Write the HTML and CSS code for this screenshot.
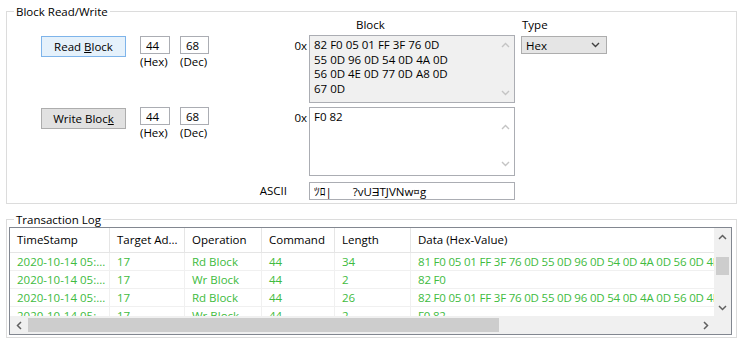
FILE: index.html
```html
<!DOCTYPE html>
<html lang="en">
<head>
    <meta charset="UTF-8">
    <title>Block Read/Write</title>
    <link rel="stylesheet" href="styles.css">
</head>
<body>
    <fieldset class="group block-group">
        <legend>Block Read/Write</legend>
        <div class="block-grid">
            <span class="col-title block-title">Block</span>
            <span class="col-title type-title">Type</span>

            <button class="btn btn-default read-btn">Read <u>B</u>lock</button>
            <div class="addr read-addr">
                <label class="addr-field"><input class="addr-hex" value="44"><span>(Hex)</span></label>
                <label class="addr-field"><input class="addr-dec" value="68"><span>(Dec)</span></label>
            </div>
            <span class="prefix read-prefix">0x</span>
            <div class="memo memo-readonly read-memo">
                <textarea readonly>82 F0 05 01 FF 3F 76 0D
55 0D 96 0D 54 0D 4A 0D
56 0D 4E 0D 77 0D A8 0D
67 0D</textarea>
                <div class="memo-scroll">
                    <svg width="9" height="6" viewBox="0 0 9 6"><path d="M1 5 L4.5 1.5 L8 5" /></svg>
                    <svg width="9" height="6" viewBox="0 0 9 6"><path d="M1 1 L4.5 4.5 L8 1" /></svg>
                </div>
            </div>
            <div class="combo">
                <span>Hex</span>
                <svg width="9" height="6" viewBox="0 0 9 6"><path d="M1 1 L4.5 4.5 L8 1" /></svg>
            </div>

            <button class="btn write-btn">Write Bloc<u>k</u></button>
            <div class="addr write-addr">
                <label class="addr-field"><input class="addr-hex" value="44"><span>(Hex)</span></label>
                <label class="addr-field"><input class="addr-dec" value="68"><span>(Dec)</span></label>
            </div>
            <span class="prefix write-prefix">0x</span>
            <div class="memo write-memo">
                <textarea>F0 82</textarea>
                <div class="memo-scroll write-scroll">
                    <svg width="9" height="6" viewBox="0 0 9 6"><path d="M1 5 L4.5 1.5 L8 5" /></svg>
                    <svg width="9" height="6" viewBox="0 0 9 6"><path d="M1 1 L4.5 4.5 L8 1" /></svg>
                </div>
            </div>

            <span class="ascii-label">ASCII</span>
            <input class="ascii-input" value="ﾂﾛ|       ?vUƎTJVNw¤g">
        </div>
    </fieldset>

    <fieldset class="group log-group">
        <legend>Transaction Log</legend>
        <div class="listview">
            <div class="list-body">
                <div class="log-row log-head">
                    <span>TimeStamp</span>
                    <span>Target Ad...</span>
                    <span>Operation</span>
                    <span>Command</span>
                    <span>Length</span>
                    <span>Data (Hex-Value)</span>
                </div>
                <div class="log-row">
                    <span>2020-10-14 05:...</span>
                    <span>17</span>
                    <span>Rd Block</span>
                    <span>44</span>
                    <span>34</span>
                    <span class="hex">81 F0 05 01 FF 3F 76 0D 55 0D 96 0D 54 0D 4A 0D 56 0D 4E 0D 77 0D A8 0D 67 0D 3C 0D 11 0D 59 0D 21 0D</span>
                </div>
                <div class="log-row">
                    <span>2020-10-14 05:...</span>
                    <span>17</span>
                    <span>Wr Block</span>
                    <span>44</span>
                    <span>2</span>
                    <span class="hex">82 F0</span>
                </div>
                <div class="log-row">
                    <span>2020-10-14 05:...</span>
                    <span>17</span>
                    <span>Rd Block</span>
                    <span>44</span>
                    <span>26</span>
                    <span class="hex">82 F0 05 01 FF 3F 76 0D 55 0D 96 0D 54 0D 4A 0D 56 0D 4E 0D 77 0D A8 0D 67 0D</span>
                </div>
                <div class="log-row">
                    <span>2020-10-14 05:...</span>
                    <span>17</span>
                    <span>Wr Block</span>
                    <span>44</span>
                    <span>2</span>
                    <span class="hex">F0 82</span>
                </div>
            </div>
            <div class="vscroll">
                <div class="arrow"><svg width="9" height="6" viewBox="0 0 9 6"><path d="M1 5 L4.5 1.5 L8 5" /></svg></div>
                <div class="track"><div class="thumb"></div></div>
                <div class="arrow"><svg width="9" height="6" viewBox="0 0 9 6"><path d="M1 1 L4.5 4.5 L8 1" /></svg></div>
            </div>
            <div class="hscroll">
                <div class="arrow"><svg width="6" height="9" viewBox="0 0 6 9"><path d="M5 1 L1.5 4.5 L5 8" /></svg></div>
                <div class="track"><div class="thumb"></div></div>
                <div class="arrow"><svg width="6" height="9" viewBox="0 0 6 9"><path d="M1 1 L4.5 4.5 L1 8" /></svg></div>
            </div>
            <div class="corner"></div>
        </div>
    </fieldset>
</body>
</html>
```

FILE: styles.css
```css
* {
    box-sizing: border-box;
}

body {
    margin: 0;
    padding: 5px 7px 0 6px;
    width: 744px;
    height: 344px;
    overflow: hidden;
    background-color: #ffffff;
    color: #000000;
    font-family: "Open Sans", "Noto Sans CJK JP", sans-serif;
    font-size: 11.5px;
}

.group {
    margin: 0;
    padding: 0;
    min-width: 0;
    border: 1px solid #dcdcdc;
}

.group legend {
    margin-left: 7px;
    padding: 0 2px;
    line-height: 13px;
}

/* block read / write */

.block-grid {
    display: grid;
    grid-template-columns: 85px 83px 100px 206px 92px;
    grid-template-rows: 13px 68px 69px 20px;
    row-gap: 4px;
    padding: 0 0 3px 34px;
}

.col-title {
    grid-row: 1;
    line-height: 13px;
}

.block-title {
    grid-column: 4;
    padding-left: 47px;
}

.type-title {
    grid-column: 5;
    justify-self: end;
    width: 86px;
    padding-left: 1px;
}

.btn {
    grid-column: 1;
    align-self: start;
    margin-top: 1px;
    height: 21px;
    padding: 0;
    font: inherit;
    color: #000000;
    background-color: #e1e1e1;
    border: 1px solid #adadad;
}

.btn-default {
    background-color: #e5f1fb;
    border-color: #7eb4ea;
}

.read-btn, .read-addr, .read-prefix, .read-memo, .combo {
    grid-row: 2;
}

.write-btn, .write-addr, .write-prefix, .write-memo {
    grid-row: 3;
}

.addr {
    grid-column: 2;
    align-self: start;
    display: flex;
    gap: 10px;
    margin: 1px 0 0 14px;
}

.write-addr {
    margin-top: 0;
}

.addr-field {
    display: flex;
    flex-direction: column;
}

.addr-field input {
    height: 18px;
    padding: 0 0 0 5px;
    font: inherit;
    border: 1px solid #abadb3;
}

.addr-hex {
    width: 30px;
}

.addr-dec {
    width: 29px;
}

.addr-field span {
    margin-top: 1px;
    line-height: 14px;
}

.prefix {
    grid-column: 3;
    justify-self: end;
    padding: 3px 2px 0 0;
    line-height: 15px;
}

.memo {
    grid-column: 4;
    display: flex;
    border: 1px solid #abadb3;
    background-color: #ffffff;
}

.memo-readonly {
    background-color: #f0f0f0;
}

.memo textarea {
    flex: 1;
    margin: 0;
    padding: 2px 0 0 4px;
    border: none;
    outline: none;
    resize: none;
    overflow: hidden;
    background: transparent;
    color: #000000;
    font: inherit;
    line-height: 14.7px;
}

.memo-scroll {
    width: 17px;
    display: flex;
    flex-direction: column;
    justify-content: space-between;
    align-items: center;
    padding: 6px 0 6px;
}

.write-scroll {
    padding: 16px 0 8px;
}

.memo-scroll path {
    fill: none;
    stroke: #c4c4c4;
    stroke-width: 1.4;
}

.combo {
    grid-column: 5;
    justify-self: end;
    align-self: start;
    width: 86px;
    height: 18px;
    margin-top: 1px;
    display: flex;
    align-items: center;
    justify-content: space-between;
    padding: 0 6px 0 4px;
    background-color: #e5e5e5;
    border: 1px solid #adadad;
}

.combo path {
    fill: none;
    stroke: #404040;
    stroke-width: 1.4;
}

.ascii-label {
    grid-column: 3;
    grid-row: 4;
    justify-self: end;
    align-self: end;
    padding-right: 22px;
    line-height: 18px;
}

.ascii-input {
    grid-column: 4;
    grid-row: 4;
    align-self: end;
    height: 18px;
    padding: 0 0 0 4px;
    font: inherit;
    border: 1px solid #abadb3;
}

/* transaction log */

.log-group {
    margin-top: 9px;
    padding: 1px 4px 2px 2px;
}

.log-group legend {
    margin-left: 5px;
}

.listview {
    height: 108px;
    display: grid;
    grid-template-columns: 1fr 17px;
    grid-template-rows: 1fr 18px;
    border: 1px solid #828790;
}

.list-body {
    overflow: hidden;
}

.log-row {
    display: grid;
    grid-template-columns: 100px 75px 77px 73px 76px 620px;
    width: 1021px;
    height: 18px;
    border-bottom: 1px solid #f0f0f0;
    color: #40bb40;
}

.log-row span {
    padding-left: 7px;
    line-height: 17px;
    white-space: nowrap;
    overflow: hidden;
    border-right: 1px solid #f0f0f0;
}

.log-row .hex {
    letter-spacing: -0.2px;
}

.log-head {
    height: 25px;
    color: #000000;
    border-bottom-color: #e5e5e5;
}

.log-head span {
    line-height: 24px;
    border-right-color: #e5e5e5;
}

.vscroll, .hscroll {
    display: flex;
    background-color: #f0f0f0;
}

.vscroll {
    flex-direction: column;
}

.arrow {
    flex: 0 0 17px;
    display: flex;
    align-items: center;
    justify-content: center;
}

.arrow path {
    fill: none;
    stroke: #606060;
    stroke-width: 1.5;
}

.track {
    flex: 1;
}

.vscroll .thumb {
    width: 13px;
    height: 18px;
    margin: 12px 0 0 2px;
    background-color: #cdcdcd;
}

.hscroll .thumb {
    width: 471px;
    height: 14px;
    margin: 2px 0 0 1px;
    background-color: #cdcdcd;
}

.corner {
    background-color: #f0f0f0;
}
```
